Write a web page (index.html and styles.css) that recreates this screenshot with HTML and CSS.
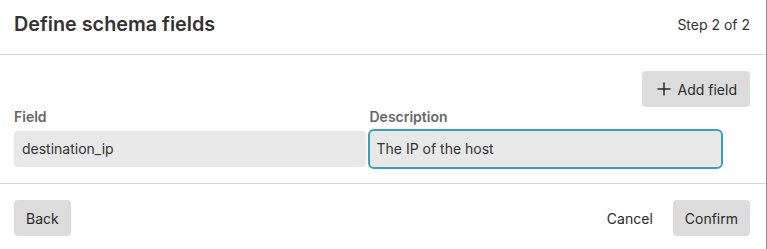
FILE: index.html
```html
<!DOCTYPE html>
<html>
<head>
<meta charset="utf-8">
<link rel="stylesheet" href="styles.css">
</head>
<body>
<div class="modal">
  <header class="modal-header">
    <h1 class="title">Define schema fields</h1>
    <span class="step">Step 2 of 2</span>
  </header>
  <section class="modal-body">
    <div class="toolbar">
      <button class="btn btn-add" type="button">
        <svg class="plus" width="14" height="14" viewBox="0 0 14 14" aria-hidden="true"><path d="M7 0.5V13.5M0.5 7H13.5" stroke="#2b2b2b" stroke-width="1.5" fill="none"/></svg>
        <span>Add field</span>
      </button>
    </div>
    <div class="fields">
      <label class="label">Field</label>
      <label class="label">Description</label>
      <span></span>
      <div class="input">destination_ip</div>
      <div class="input focused">The IP of the host</div>
      <span></span>
    </div>
  </section>
  <footer class="modal-footer">
    <button class="btn" type="button">Back</button>
    <div class="actions">
      <button class="btn btn-ghost" type="button">Cancel</button>
      <button class="btn" type="button">Confirm</button>
    </div>
  </footer>
</div>
</body>
</html>
```
FILE: styles.css
```css
* { box-sizing: border-box; }
html, body { margin: 0; padding: 0; background: #fff; }
body {
  font-family: Inter, "Noto Sans", sans-serif;
  color: #2e2e2e;
}
.modal {
  width: 767px;
  height: 249px;
  border-right: 1px solid #8c8c8c;
  display: flex;
  flex-direction: column;
}
.modal-header {
  height: 55px;
  border-bottom: 1px solid #d6d6d6;
  display: flex;
  justify-content: space-between;
  align-items: flex-start;
  padding: 10px 16px 0 14px;
}
.title {
  margin: 0;
  font-size: 19.8px;
  line-height: 28px;
  font-weight: 600;
  color: #333;
}
.step {
  font-size: 14px;
  line-height: 28px;
  color: #333;
  padding-top: 1px;
}
.modal-body {
  padding: 16px 16px 16px 14px;
  border-bottom: 1px solid #d6d6d6;
}
.toolbar {
  display: flex;
  justify-content: flex-end;
}
.btn {
  font-family: inherit;
  font-size: 14px;
  color: #2b2b2b;
  background: #dcdcdc;
  border: none;
  border-radius: 4px;
  height: 36px;
  padding: 0 12px;
  display: inline-flex;
  align-items: center;
  gap: 7px;
  white-space: nowrap;
}
.btn-add { padding: 0 13px 0 15px; }
.btn-ghost { background: transparent; }
.fields {
  display: grid;
  grid-template-columns: 1fr 1fr 25px;
  column-gap: 4px;
  row-gap: 4px;
}
.label {
  font-size: 14px;
  line-height: 20px;
  font-weight: 600;
  color: #666;
}
.input {
  height: 36px;
  background: #e8e8e8;
  border-radius: 4px;
  font-size: 14px;
  line-height: 36px;
  padding: 0 8px;
  color: #333;
}
.input.focused {
  outline: 2px solid #2fa3bf;
  outline-offset: 0;
  padding-left: 7px;
}
.modal-footer {
  flex: 1;
  display: flex;
  justify-content: space-between;
  align-items: flex-start;
  padding: 16px 16px 0 14px;
}
.actions { display: flex; gap: 8px; }
```
